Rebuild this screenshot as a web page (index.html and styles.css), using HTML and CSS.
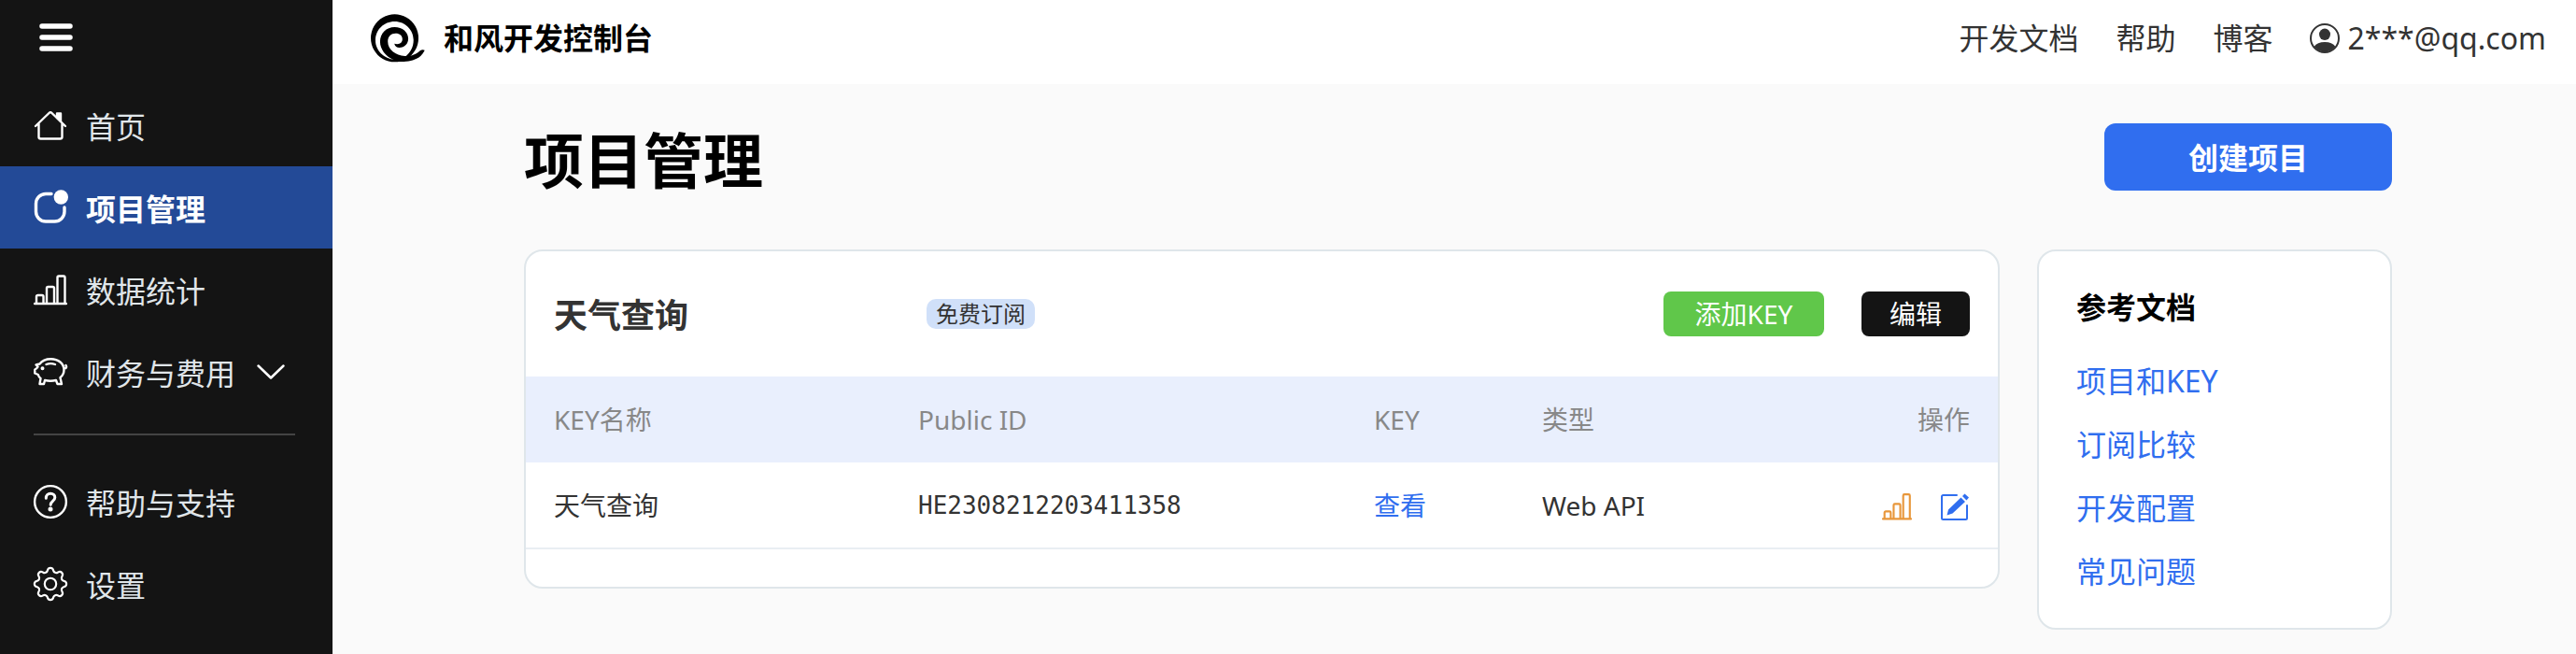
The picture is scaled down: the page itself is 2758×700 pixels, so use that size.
FILE: index.html
```html
<!DOCTYPE html>
<html lang="zh-CN">
<head>
<meta charset="utf-8">
<meta name="viewport" content="width=device-width, initial-scale=1">
<title>项目管理 - 和风开发控制台</title>
<link rel="stylesheet" href="styles.css">
</head>
<body>
<svg class="sprite" aria-hidden="true">
  <symbol id="bars" viewBox="0 0 36 36">
    <path d="M1 33H35M3 33V25.5a1.5 1.5 0 0 1 1.500-1.500H9a1.500 1.500 0 0 1 1.500 1.500V33M14 33V16.500a1.500 1.500 0 0 1 1.500-1.500H20.500a1.500 1.500 0 0 1 1.500 1.500V33M25.500 33V5a1.500 1.500 0 0 1 1.500-1.500H32a1.500 1.500 0 0 1 1.500 1.500V33"/>
  </symbol>
</svg>
<div class="layout">
  <aside class="sidebar">
    <div class="sidebar-top">
      <button class="menu-toggle" type="button" aria-label="菜单">
        <svg class="icon icon-menu" viewBox="0 0 36 36"><path d="M3 6H33M3 18H33M3 30H33"/></svg>
      </button>
    </div>
    <nav class="side-nav">
      <a class="side-link" href="#">
        <svg class="icon" viewBox="0 0 36 36"><path d="M2 19 16.500 5q1.500-1.500 3 0L34 19M5.500 16.500V30.500a2 2 0 0 0 2 2H28.500a2 2 0 0 0 2-2V16.500"/><path class="solid" d="M25 5.500h4v8.500l-4-4z"/></svg>
        <span>首页</span>
      </a>
      <a class="side-link active" href="#" aria-current="page">
        <svg class="icon icon-thick" viewBox="0 0 36 36"><path d="M19 3.500H13a10.500 10.500 0 0 0-10.500 10.500V22.500a10.500 10.500 0 0 0 10.500 10.500H22.500a10.500 10.500 0 0 0 10.500-10.500V18"/><circle class="dot" cx="29.300" cy="7" r="7.700"/></svg>
        <span>项目管理</span>
      </a>
      <a class="side-link" href="#">
        <svg class="icon"><use href="#bars"/></svg>
        <span>数据统计</span>
      </a>
      <a class="side-link" href="#">
        <svg class="icon" viewBox="0 0 36 36"><path d="M6.500 9.500C9 6 13 4.200 18.500 4.200 26.500 4.200 32.500 9 32.500 16c0 3.500-1.500 6-4 8.200L30 31H25.500l-1.500-4Q18 28.500 12 27L11 31H6.500L7.500 25Q5.500 23.500 4.800 21L1.300 19.500V15.500Q3.500 14.500 4.600 12.500L2.500 10.500ZM13.500 10q4.800-1.800 9.500 0M32.500 14.500Q36.500 14 34.500 11"/><circle class="solid" cx="9.500" cy="14.200" r=".8"/></svg>
        <span>财务与费用</span>
        <svg class="chevron" viewBox="0 0 30 16"><path d="M1.500 1.500 15 14.500 28.500 1.500"/></svg>
      </a>
      <hr class="side-rule">
      <a class="side-link" href="#">
        <svg class="icon" viewBox="0 0 36 36"><circle cx="18" cy="18" r="16.900"/><path class="query" d="M13.300 14.200c0-3 2-4.900 4.800-4.900s4.700 1.700 4.700 4.100c0 4-4.600 3.800-4.600 7.800"/><circle class="solid" cx="18" cy="26" r="1.300"/></svg>
        <span>帮助与支持</span>
      </a>
      <a class="side-link" href="#">
        <svg class="icon icon-gear" viewBox="-.4 -.4 16.800 16.800"><path d="M9.405 1.050c-.413-1.400-2.397-1.400-2.810 0l-.1.340a1.464 1.464 0 0 1-2.105.872l-.310-.170c-1.283-.698-2.686.705-1.987 1.987l.169.311c.446.820.023 1.841-.872 2.105l-.340.100c-1.400.413-1.400 2.397 0 2.810l.340.100a1.464 1.464 0 0 1 .872 2.105l-.170.310c-.698 1.283.705 2.686 1.987 1.987l.311-.169a1.464 1.464 0 0 1 2.105.872l.100.340c.413 1.400 2.397 1.400 2.810 0l.100-.340a1.464 1.464 0 0 1 2.105-.872l.310.170c1.283.698 2.686-.705 1.987-1.987l-.169-.311a1.464 1.464 0 0 1 .872-2.105l.340-.100c1.400-.413 1.400-2.397 0-2.810l-.340-.100a1.464 1.464 0 0 1-.872-2.105l.170-.310c.698-1.283-.705-2.686-1.987-1.987l-.311.169a1.464 1.464 0 0 1-2.105-.872z"/><circle cx="8" cy="8" r="2.900"/></svg>
        <span>设置</span>
      </a>
    </nav>
  </aside>

  <div class="page">
    <header class="topbar">
      <a class="brand" href="#">
        <svg class="logo" viewBox="50 42 175 155" aria-hidden="true">
          <path fill-rule="evenodd" d="M127 42a77 77 0 1 0 .1 0ZM127 65C162 65 188 93 188 125 188 148 178 166 160 180L128 188C92 186 65 158 65 126 65 92 92 65 127 65Z"/>
          <path d="M126 137Q130 150 142 150C160 149 171 136 171 121 171 99 152 83 127 83 100 83 80 103 80 131 80 155 98 178 122 188L140 195C195 197 215 178 224 158Q217 154 210 159C195 173 180 178 160 177 130 174 105 157 105 130 105 113 116 104 130 104 144 104 152 112 152 122 152 134 143 141 126 137Z"/>
        </svg>
        <span>和风开发控制台</span>
      </a>
      <nav class="top-nav">
        <a href="#">开发文档</a>
        <a href="#">帮助</a>
        <a href="#">博客</a>
        <a class="account" href="#">
          <svg class="icon-user" viewBox="0 0 32 32" aria-hidden="true"><circle class="ring" cx="16" cy="16" r="15"/><ellipse cx="16" cy="11.800" rx="6" ry="6.200"/><path d="M4.500 25Q8 20 16 20T27.500 25A15 15 0 0 1 4.500 25Z"/></svg>
          <span>2***@qq.com</span>
        </a>
      </nav>
    </header>

    <main class="content">
      <div class="heading">
        <h1>项目管理</h1>
        <button class="btn-create" type="button">创建项目</button>
      </div>
      <div class="columns">
        <section class="card project">
          <div class="project-head">
            <h2>天气查询</h2>
            <span class="badge">免费订阅</span>
            <div class="project-actions">
              <button class="btn btn-green" type="button">添加KEY</button>
              <button class="btn btn-dark" type="button">编辑</button>
            </div>
          </div>
          <table class="keys">
            <thead>
              <tr><th class="col-name">KEY名称</th><th class="col-id">Public ID</th><th class="col-key">KEY</th><th>类型</th><th class="col-ops">操作</th></tr>
            </thead>
            <tbody>
              <tr>
                <td>天气查询</td>
                <td class="mono">HE2308212203411358</td>
                <td><a href="#">查看</a></td>
                <td>Web API</td>
                <td>
                  <div class="ops">
                    <a class="op-stats" href="#" aria-label="统计"><svg><use href="#bars"/></svg></a>
                    <a class="op-edit" href="#" aria-label="编辑"><svg viewBox="0 0 32 32"><path d="M18 4H3.500A1.500 1.500 0 0 0 2 5.500V28.500A1.500 1.500 0 0 0 3.500 30H27.500A1.500 1.500 0 0 0 29 28.500V15"/><path class="solid" d="M22.500 6.500 27 11 13.500 23.500 7.500 25.500 9 19.500ZM24 5 26.500 2.500 31 6.500 28.500 9.500Z"/></svg></a>
                  </div>
                </td>
              </tr>
            </tbody>
          </table>
        </section>
        <aside class="card docs">
          <h3>参考文档</h3>
          <ul>
            <li><a href="#">项目和KEY</a></li>
            <li><a href="#">订阅比较</a></li>
            <li><a href="#">开发配置</a></li>
            <li><a href="#">常见问题</a></li>
          </ul>
        </aside>
      </div>
    </main>
  </div>
</div>
</body>
</html>
```

FILE: styles.css
```css
* { box-sizing: border-box; }

body {
  margin: 0;
  background: #fafafa;
  color: #333;
  font: 32px/48px "Noto Sans", "Noto Sans CJK SC", sans-serif;
}

a { color: #306eef; text-decoration: none; }
h1, h2, h3, ul { margin: 0; padding: 0; }
ul { list-style: none; }
button { border: 0; font-family: inherit; cursor: pointer; }
svg { display: block; flex: none; overflow: visible; }
.sprite { position: absolute; width: 0; height: 0; }

.layout { display: flex; min-height: 100vh; }

/* Sidebar */
.sidebar { flex: none; width: 356px; background: #141414; }
.sidebar-top { display: flex; align-items: center; height: 90px; padding: 0 42px; }
.menu-toggle { padding: 0 0 10px; background: none; }
.side-link {
  display: flex;
  align-items: center;
  height: 88px;
  padding: 0 36px;
  gap: 20px;
  color: #e0e6ea;
}
.side-link span { padding-top: 3px; }
.side-link.active { background: #234a97; color: #fff; font-weight: 700; }
.icon { width: 36px; height: 36px; fill: none; stroke: #fff; stroke-width: 2.400; stroke-linejoin: round; stroke-linecap: round; }
.icon-menu { stroke-width: 5.500; }
.icon-thick { stroke-width: 3.400; }
.icon-gear { stroke-width: 1; }
.solid { fill: currentColor; }
.icon .solid { fill: #fff; }
.icon .dot { fill: #fff; stroke: none; }
.icon .query { stroke-width: 3; }
.chevron { width: 30px; height: 16px; margin-left: 3px; fill: none; stroke: #fff; stroke-width: 2.500; stroke-linecap: round; stroke-linejoin: round; }
.side-rule { height: 2px; margin: 22px 40px 27px 36px; border: 0; background: #444; }

/* Top bar */
.page { flex: 1; min-width: 0; }
.topbar {
  display: flex;
  align-items: center;
  justify-content: space-between;
  height: 90px;
  padding: 0 32px 8px 41px;
  background: #fff;
}
.brand { display: flex; align-items: center; gap: 20px; color: #000; font-weight: 700; }
.logo { width: 58px; height: 52px; }
.top-nav { display: flex; align-items: center; gap: 40px; }
.top-nav a { color: #333; }
.account { display: flex; align-items: center; gap: 8px; }
.icon-user { width: 32px; height: 32px; fill: #333; }
.ring { fill: none; stroke: #333; stroke-width: 2; }

/* Content */
.content { max-width: 2008px; margin: 0 auto; padding: 42px 0 27px 8px; }
.heading { display: flex; align-items: flex-start; justify-content: space-between; margin-bottom: 55px; }
h1 { color: #000; font-size: 64px; line-height: 80px; }
.btn-create {
  width: 308px;
  height: 72px;
  padding: 0 0 3px;
  border-radius: 12px;
  background: #306eef;
  color: #fff;
  font-size: 32px;
  font-weight: 700;
}
.columns { display: flex; align-items: flex-start; gap: 40px; }
.card { border: 2px solid #dfe6ea; border-radius: 20px; background: #fff; }

.project { flex: 1; min-width: 0; padding-bottom: 40px; }
.project-head { display: grid; grid-template-columns: 399px auto 1fr; align-items: center; height: 134px; padding: 0 30px; }
h2 { padding-top: 4px; font-size: 36px; line-height: 48px; }
.badge { padding: 0 10px; border-radius: 10px; background: #d0e0f9; font-size: 24px; line-height: 32px; }
.project-actions { display: flex; justify-content: flex-end; gap: 40px; }
.btn { height: 48px; padding: 0 30px; border-radius: 8px; color: #fff; font-size: 28px; line-height: 46px; }
.btn-green { min-width: 172px; background: #60c74a; }
.btn-dark { background: #141414; }

.keys { width: 100%; border-collapse: collapse; table-layout: fixed; font-size: 28px; line-height: 44px; }
.keys th, .keys td { height: 92px; padding: 0 30px; text-align: left; vertical-align: middle; }
.keys th { background: #e9effd; color: #888; font-weight: 400; }
.keys td { border-bottom: 2px solid #e9eef3; }
.col-name { width: 390px; }
.col-id { width: 488px; }
.col-key { width: 180px; }
.keys .col-ops { text-align: right; }
.keys .mono { font-family: "DejaVu Sans Mono", monospace; font-size: 26px; }
.ops { display: flex; justify-content: flex-end; gap: 30px; padding-top: 3px; }
.ops svg { width: 32px; height: 32px; fill: none; stroke: currentColor; stroke-width: 2; stroke-linejoin: round; stroke-linecap: round; }
.ops .op-stats svg { stroke-width: 2.400; }
.ops .solid { fill: currentColor; stroke: none; }
.op-stats { color: #e8963a; }

.docs { flex: none; width: 380px; padding: 36px 40px; }
h3 { margin-bottom: 31px; color: #000; font-size: 32px; line-height: 48px; }
.docs ul { display: grid; gap: 20px; }
```
